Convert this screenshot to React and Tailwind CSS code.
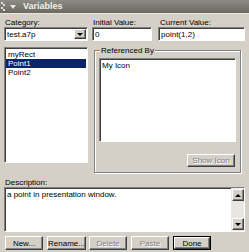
import { ChevronDown } from 'lucide-react';

const sunken =
  'bg-white border border-t-[#808080] border-l-[#808080] border-r-white border-b-white shadow-[inset_1px_1px_0_#404040]';
const raised =
  'bg-[#d4d0c8] border border-t-white border-l-white border-r-[#404040] border-b-[#404040] shadow-[inset_-1px_-1px_0_#808080]';

function Button({ label, disabled, isDefault }) {
  return (
    <div
      className={`${isDefault ? 'border border-black' : ''} w-[38px] h-[14px] flex`}
    >
      <div
        className={`${raised} flex-1 flex items-center justify-center ${
          disabled
            ? 'text-[#808080] [text-shadow:1px_1px_0_#fff]'
            : 'text-black'
        }`}
      >
        {label}
      </div>
    </div>
  );
}

function Arrow({ up }) {
  return (
    <div className={`${raised} w-[12px] h-[12px] flex items-center justify-center`}>
      <div
        className={`w-0 h-0 border-l-[3px] border-r-[3px] border-l-transparent border-r-transparent ${
          up ? 'border-b-[3px] border-b-black' : 'border-t-[3px] border-t-black'
        }`}
      />
    </div>
  );
}

export default function App() {
  const items = ['myRect', 'Point1', 'Point2'];

  return (
    <div className="w-[249px] h-[252px] bg-[#d4d0c8] overflow-hidden text-[8px] leading-[9px] text-black font-['Liberation_Sans',Arial,sans-serif] flex flex-col">
      <div className="h-[14px] bg-gradient-to-b from-[#8c8c84] to-[#6a6a62] border-b border-b-[#e8e8e0] flex items-center">
        <div className="w-[4px] h-[12px] ml-[1px] flex flex-col justify-between py-[1px]">
          <div className="w-[2px] h-[2px] bg-[#e0e0d8]" />
          <div className="w-[2px] h-[2px] bg-[#e0e0d8] ml-[2px]" />
          <div className="w-[2px] h-[2px] bg-[#e0e0d8]" />
          <div className="w-[2px] h-[2px] bg-[#e0e0d8] ml-[2px]" />
        </div>
        <div className="ml-[5px] w-0 h-0 border-l-[3px] border-r-[3px] border-t-[4px] border-l-transparent border-r-transparent border-t-[#e8e8e0]" />
        <span className="ml-[7px] text-[9px] font-bold text-[#f0f0e8]">Variables</span>
      </div>

      <div className="flex px-[4px] pt-[4px]">
        <div className="w-[84px] flex flex-col">
          <span className="pl-[1px] h-[9px]">Category:</span>
          <div className={`${sunken} h-[14px] flex items-center pl-[2px]`}>
            <span className="flex-1">test.a7p</span>
            <div className={`${raised} w-[12px] h-[10px] mr-[1px] flex items-center justify-center`}>
              <div className="w-0 h-0 border-l-[3px] border-r-[3px] border-t-[3px] border-l-transparent border-r-transparent border-t-black" />
            </div>
          </div>
          <div className={`${sunken} mt-[6px] h-[116px] flex flex-col pt-[2px] px-[1px]`}>
            {items.map((item) => (
              <div
                key={item}
                className={`h-[9px] pl-[2px] ${
                  item === 'Point1' ? 'bg-[#0a246a] text-white' : ''
                }`}
              >
                {item}
              </div>
            ))}
          </div>
        </div>

        <div className="flex-1 ml-[4px] flex flex-col">
          <div className="flex gap-[6px]">
            <div className="w-[60px] flex flex-col">
              <span className="pl-[1px] h-[9px]">Initial Value:</span>
              <div className={`${sunken} h-[14px] flex items-center pl-[2px]`}>0</div>
            </div>
            <div className="flex-1 flex flex-col">
              <span className="pl-[2px] h-[9px]">Current Value:</span>
              <div className={`${sunken} h-[14px] flex items-center pl-[2px]`}>point(1,2)</div>
            </div>
          </div>

          <div className="relative mt-[9px] mr-[4px] ml-[2px] h-[123px] border border-[#808080] shadow-[inset_1px_1px_0_#fff,1px_1px_0_#fff] flex flex-col px-[4px] pt-[7px]">
            <span className="absolute -top-[5px] left-[5px] px-[1px] bg-[#d4d0c8]">Referenced By</span>
            <div className={`${sunken} h-[84px] pl-[2px] pt-[2px]`}>My Icon</div>
            <div className="flex justify-end mt-[12px] mr-[1px]">
              <div className="w-[48px]">
                <div className={`${raised} h-[13px] flex items-center justify-center text-[#808080] [text-shadow:1px_1px_0_#fff]`}>
                  Show Icon
                </div>
              </div>
            </div>
          </div>
        </div>
      </div>

      <div className="px-[4px] mt-[5px] flex flex-col">
        <span className="pl-[1px] h-[9px]">Description:</span>
        <div className={`${sunken} h-[45px] flex`}>
          <div className="flex-1 pl-[2px] pt-[2px]">a point in presentation window.</div>
          <div className="w-[13px] flex flex-col justify-between bg-[#e8e6e0] p-[1px]">
            <Arrow up />
            <Arrow />
          </div>
        </div>
      </div>

      <div className="flex gap-[4px] px-[5px] mt-[4px]">
        <Button label="New..." />
        <Button label="Rename..." />
        <Button label="Delete" disabled />
        <Button label="Paste" disabled />
        <Button label="Done" isDefault />
      </div>
    </div>
  );
}
